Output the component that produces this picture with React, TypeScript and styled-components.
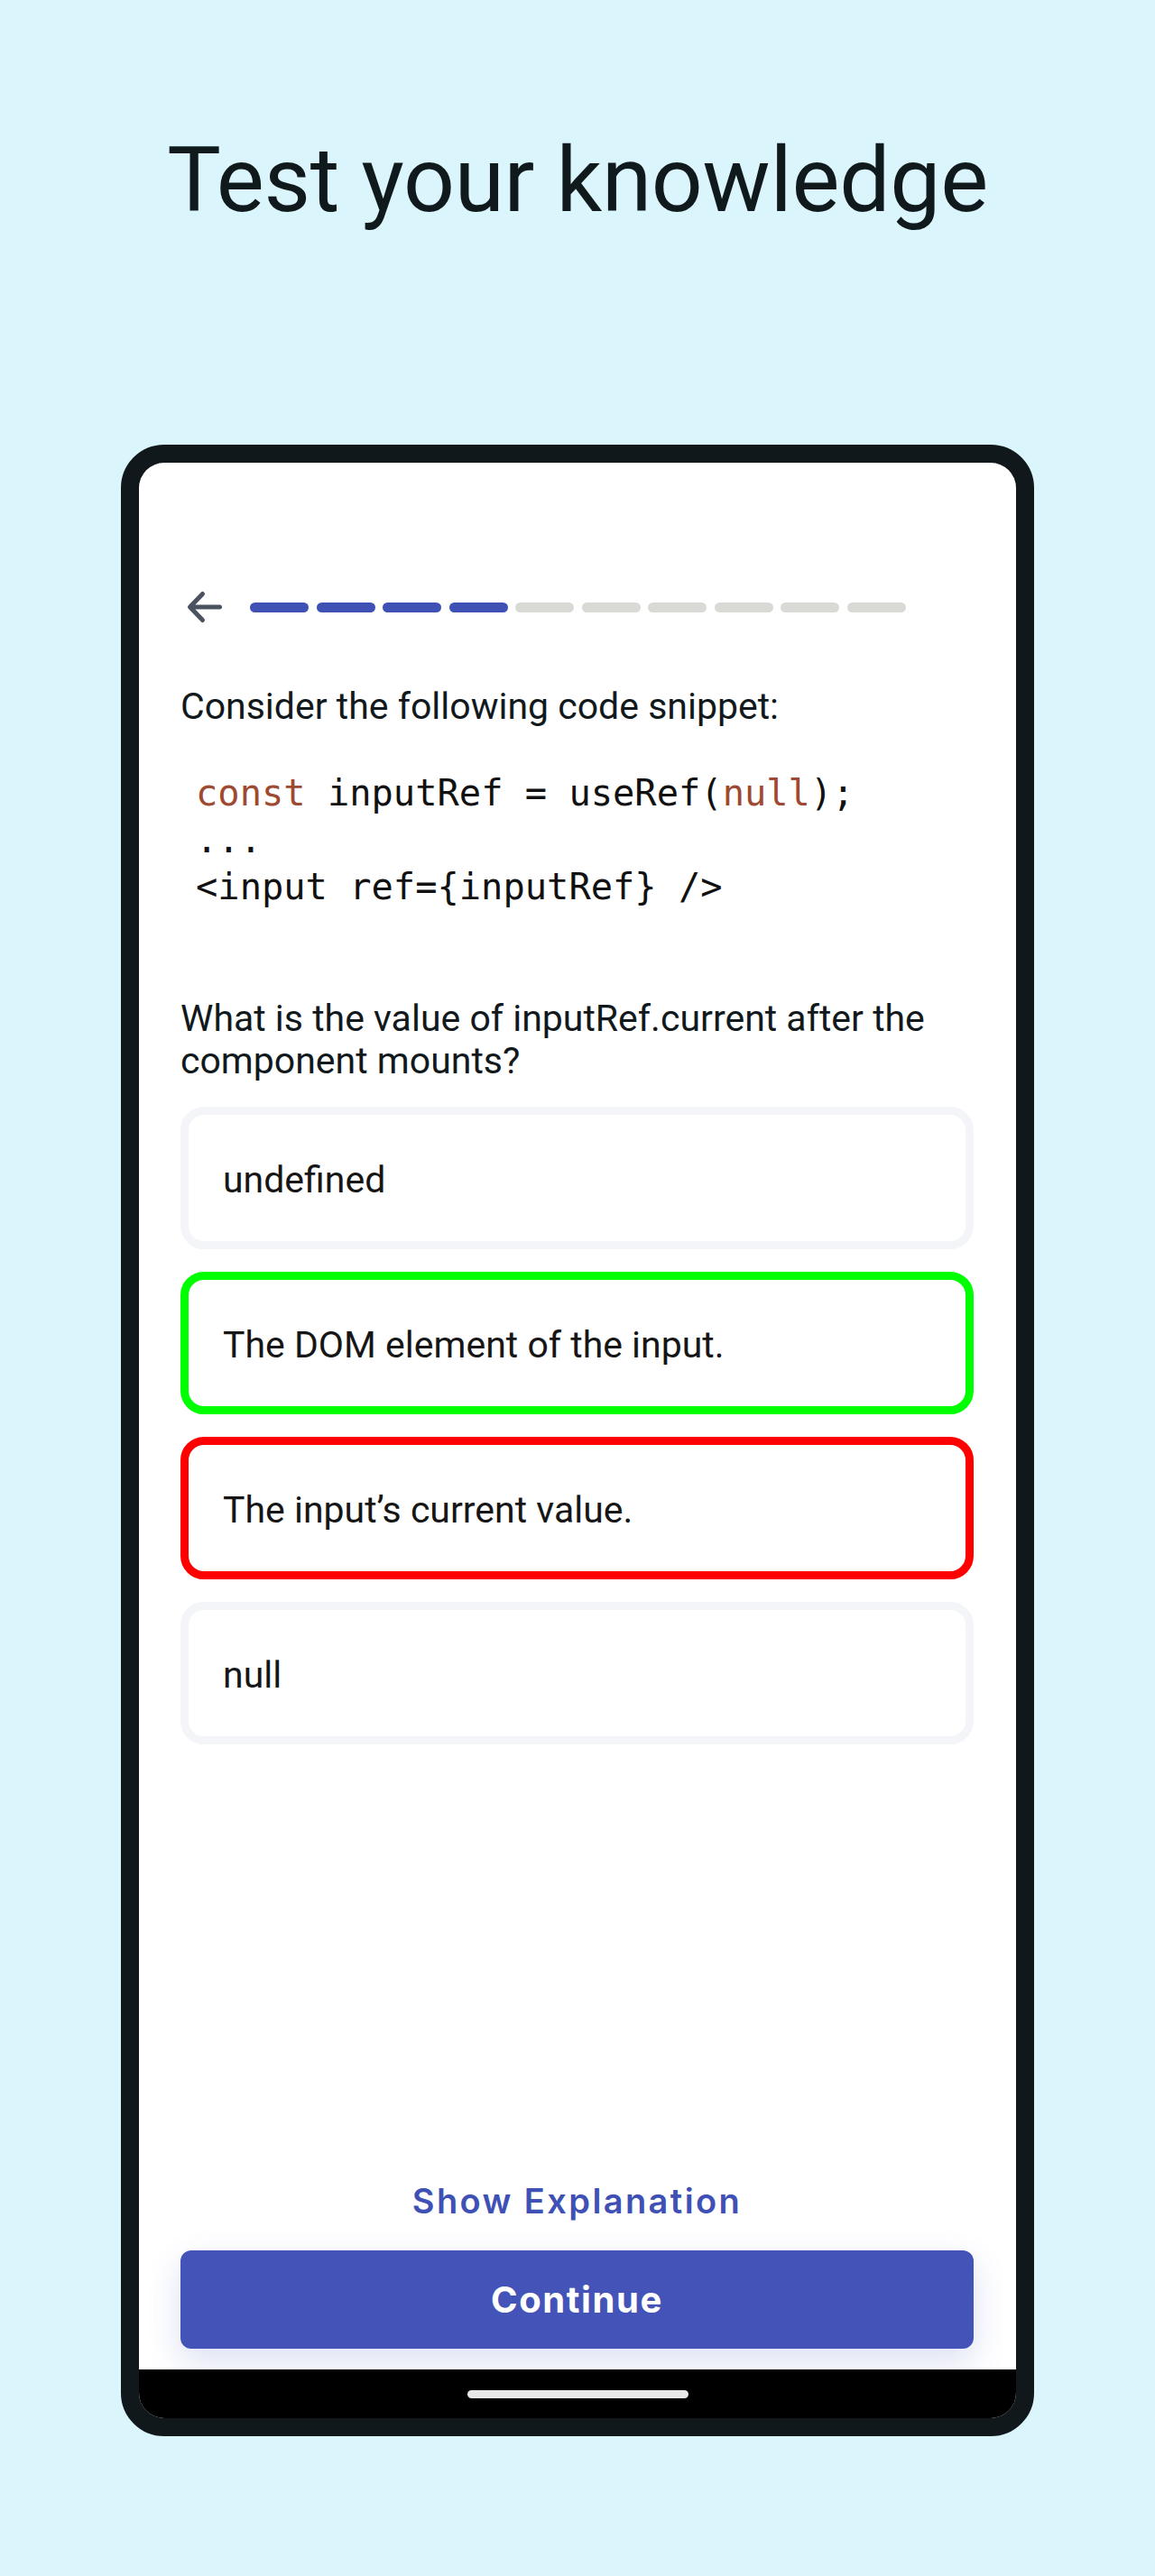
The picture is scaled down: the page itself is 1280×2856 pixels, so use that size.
import React from 'react';
import styled, { createGlobalStyle } from 'styled-components';

const GlobalStyle = createGlobalStyle`
  html, body {
    margin: 0;
    padding: 0;
  }
  body {
    background: #dbf5fd;
    font-family: Roboto, "Noto Sans", sans-serif;
    color: #11191d;
  }
  * {
    box-sizing: border-box;
  }
`;

const options = [
  { label: 'undefined', state: 'idle' },
  { label: 'The DOM element of the input.', state: 'correct' },
  { label: 'The input\u2019s current value.', state: 'wrong' },
  { label: 'null', state: 'idle' },
] as const;

type OptionState = (typeof options)[number]['state'];

const TOTAL_STEPS = 10;
const DONE_STEPS = 4;

const App: React.FC = () => {
  return (
    <>
      <GlobalStyle />
      <Page>
        <Headline>Test your knowledge</Headline>

        <PhoneFrame>
          <Screen>
            <Content>
              <TopBar>
                <BackButton aria-label="Back">
                  <svg width="48" height="48" viewBox="0 0 48 48" fill="none">
                    <path
                      d="M42.5 24H10M23.5 9.5L9.5 24L23.5 38.5"
                      stroke="#4b5361"
                      strokeWidth="5"
                      strokeLinecap="round"
                      strokeLinejoin="round"
                    />
                  </svg>
                </BackButton>
                <Progress>
                  {Array.from({ length: TOTAL_STEPS }).map((_, i) => (
                    <Step key={i} $done={i < DONE_STEPS} />
                  ))}
                </Progress>
              </TopBar>

              <Prompt>Consider the following code snippet:</Prompt>

              <CodeBlock>
                <CodeLine>
                  <Keyword>const</Keyword> inputRef = useRef(<Keyword>null</Keyword>);
                </CodeLine>
                <CodeLine>...</CodeLine>
                <CodeLine>{'<input ref={inputRef} />'}</CodeLine>
              </CodeBlock>

              <Question>
                What is the value of inputRef.current after the component mounts?
              </Question>

              <OptionList>
                {options.map((o) => (
                  <Option key={o.label} $state={o.state}>
                    {o.label}
                  </Option>
                ))}
              </OptionList>

              <Footer>
                <ExplainLink>Show Explanation</ExplainLink>
                <ContinueButton>Continue</ContinueButton>
              </Footer>
            </Content>

            <NavBar>
              <HomeIndicator />
            </NavBar>
          </Screen>
        </PhoneFrame>
      </Page>
    </>
  );
};

const Page = styled.div`
  width: 1280px;
  min-height: 2856px;
  padding-top: 140px;
  display: flex;
  flex-direction: column;
  align-items: center;
`;

const Headline = styled.h1`
  margin: 0;
  font-family: Roboto, sans-serif;
  font-weight: 400;
  font-size: 100px;
  line-height: 120px;
  color: #10191c;
  letter-spacing: -0.3px;
`;

const PhoneFrame = styled.div`
  margin-top: 233px;
  width: 1012px;
  height: 2208px;
  border: 20px solid #10181b;
  border-radius: 48px;
  background: #10181b;
`;

const Screen = styled.div`
  height: 100%;
  border-radius: 28px;
  overflow: hidden;
  background: #ffffff;
  display: flex;
  flex-direction: column;
`;

const Content = styled.div`
  flex: 1;
  display: flex;
  flex-direction: column;
  padding: 130px 47px 23px 46px;
`;

const TopBar = styled.div`
  height: 60px;
  display: flex;
  align-items: center;
`;

const BackButton = styled.div`
  width: 48px;
  height: 48px;
  margin-left: 1px;
  display: flex;

  svg {
    display: block;
  }
`;

const Progress = styled.div`
  margin-left: 28px;
  display: flex;
  gap: 8.5px;
`;

const Step = styled.div<{ $done: boolean }>`
  width: 65px;
  height: 11px;
  border-radius: 6px;
  background: ${(p) => (p.$done ? '#3f51b5' : '#d9d9d6')};
`;

const Prompt = styled.p`
  margin: 57px 0 0;
  font-size: 41px;
  line-height: 47px;
  color: #11191d;
`;

const CodeBlock = styled.pre`
  margin: 46px 0 0;
  padding-left: 17px;
  font-family: "DejaVu Sans Mono", "Liberation Mono", monospace;
  font-size: 40.4px;
  line-height: 52px;
  color: #111111;
`;

const CodeLine = styled.div`
  white-space: pre;
`;

const Keyword = styled.span`
  color: #9e4a32;
`;

const Question = styled.p`
  margin: 97px 0 0;
  font-size: 41px;
  line-height: 47px;
  color: #11191d;
`;

const OptionList = styled.div`
  margin-top: 27px;
  display: flex;
  flex-direction: column;
  gap: 25px;
`;

const borderColors: Record<OptionState, string> = {
  idle: '#f4f5f9',
  correct: '#00ff00',
  wrong: '#ff0000',
};

const Option = styled.div<{ $state: OptionState }>`
  height: 158px;
  display: flex;
  align-items: center;
  padding: 4px 38px 0;
  border: 9px solid ${(p) => borderColors[p.$state]};
  border-radius: 26px;
  font-size: 41px;
  color: #161616;
`;

const Footer = styled.div`
  margin-top: auto;
  display: flex;
  flex-direction: column;
  align-items: center;
`;

const ExplainLink = styled.div`
  font-family: Inter, "Noto Sans", sans-serif;
  font-weight: 600;
  font-size: 38px;
  line-height: 46px;
  color: #3f51b5;
  letter-spacing: 2.4px;
`;

const ContinueButton = styled.button`
  margin-top: 32px;
  width: 100%;
  height: 109px;
  border: none;
  border-radius: 12px;
  background: #4353b7;
  color: #ffffff;
  font-family: Inter, "Noto Sans", sans-serif;
  font-weight: 700;
  font-size: 40px;
  letter-spacing: 1.6px;
  box-shadow: 0 14px 36px rgba(63, 81, 181, 0.18);
`;

const NavBar = styled.div`
  height: 54px;
  background: #000000;
  display: flex;
  align-items: center;
  justify-content: center;
`;

const HomeIndicator = styled.div`
  width: 245px;
  height: 9px;
  border-radius: 5px;
  background: #e8e8e8;
`;

export default App;
